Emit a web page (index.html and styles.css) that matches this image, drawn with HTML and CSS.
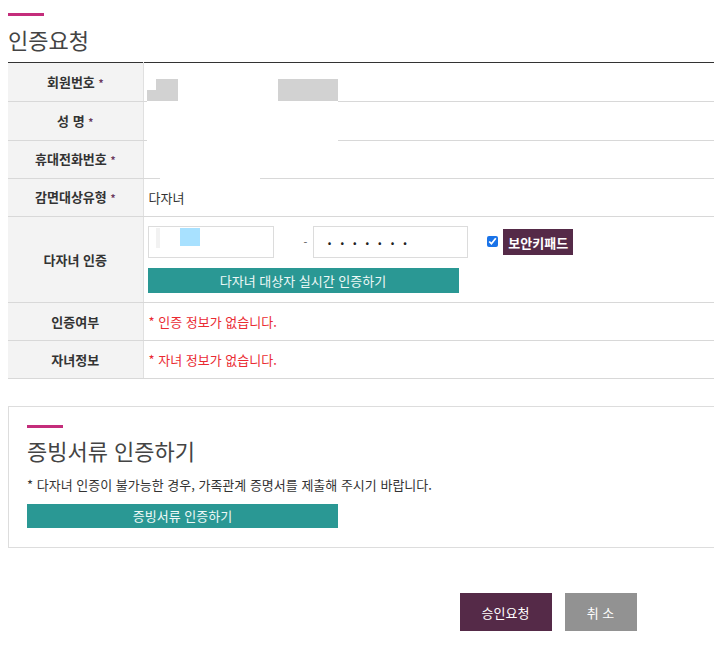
FILE: index.html
```html
<!DOCTYPE html>
<html lang="ko">
<head>
    <meta charset="UTF-8">
    <meta name="viewport" content="width=device-width, initial-scale=1.0">
    <title>인증요청</title>
    <link rel="stylesheet" href="styles.css">
</head>
<body>
<div class="page">
    <div class="bar"></div>
    <h2 class="title">인증요청</h2>

    <div class="tbl-wrap">
        <table class="form-table">
            <tr class="tall">
                <th>회원번호 <span class="req">*</span></th>
                <td></td>
            </tr>
            <tr class="tall">
                <th>성 명 <span class="req">*</span></th>
                <td></td>
            </tr>
            <tr>
                <th>휴대전화번호 <span class="req">*</span></th>
                <td></td>
            </tr>
            <tr>
                <th>감면대상유형 <span class="req">*</span></th>
                <td>다자녀</td>
            </tr>
            <tr class="auth-row">
                <th>다자녀 인증</th>
                <td>
                    <div class="ssn">
                        <div class="field field-front">
                            <span class="mask-faint"></span>
                            <span class="mask-blue"></span>
                        </div>
                        <span class="dash">-</span>
                        <div class="field field-back">.......</div>
                        <input type="checkbox" class="chk" checked>
                        <button class="keypad">보안키패드</button>
                    </div>
                    <button class="btn-teal btn-auth">다자녀 대상자 실시간 인증하기</button>
                </td>
            </tr>
            <tr>
                <th>인증여부</th>
                <td class="err">* 인증 정보가 없습니다.</td>
            </tr>
            <tr>
                <th>자녀정보</th>
                <td class="err">* 자녀 정보가 없습니다.</td>
            </tr>
        </table>
        <!-- redacted personal info -->
        <span class="cover cover-a"></span>
        <span class="cover cover-b"></span>
        <span class="blot blot-1"></span>
        <span class="blot blot-2"></span>
        <span class="blot blot-3"></span>
    </div>

    <div class="doc-box">
        <div class="bar"></div>
        <h3 class="doc-title">증빙서류 인증하기</h3>
        <p class="doc-note">* 다자녀 인증이 불가능한 경우, 가족관계 증명서를 제출해 주시기 바랍니다.</p>
        <button class="btn-teal btn-doc">증빙서류 인증하기</button>
    </div>

    <div class="actions">
        <button class="btn-ok">승인요청</button>
        <button class="btn-cancel">취 소</button>
    </div>
</div>
</body>
</html>
```

FILE: styles.css
```css
*{
    margin: 0;
    padding: 0;
    box-sizing: border-box;
}
html{
    overflow: hidden;
}
body{
    font-family: "Noto Sans CJK KR", "Noto Sans", sans-serif;
    font-size: 13px;
    color: #333;
    background: #fff;
}
button{
    font-family: inherit;
    border: none;
    cursor: pointer;
}

.page{
    width: 1088px;
    padding: 13px 0 0 8px;
}
.bar{
    width: 36px;
    height: 3px;
    background-color: #c42d7b;
}
.title{
    font-size: 22px;
    font-weight: 400;
    line-height: 30px;
    color: #444;
    margin-top: 8px;
}

.tbl-wrap{
    position: relative;
    margin-top: 8px;
}
.form-table{
    width: 100%;
    border-collapse: collapse;
    border-top: 1px solid #333;
}
.form-table th{
    width: 135px;
    height: 38px;
    background-color: #f3f3f3;
    border-right: 1px solid #e0e0e0;
    border-bottom: 1px solid #d8d8d8;
    font-size: 13px;
    font-weight: 700;
    color: #333;
    text-align: center;
    line-height: 16px;
}
.form-table td{
    height: 38px;
    padding: 0 5px;
    border-bottom: 1px solid #d8d8d8;
    line-height: 16px;
}
.form-table .tall th,
.form-table .tall td{
    height: 39px;
}
.req{
    color: #6a3a5c;
    font-size: 10px;
}
.form-table td.err{
    color: #ea2b33;
}

.auth-row td{
    padding: 9px 4px 9px;
}
.ssn{
    display: flex;
    align-items: center;
}
.field{
    height: 32px;
    border: 1px solid #dcdcdc;
    background: #fff;
}
.field-front{
    width: 126px;
    display: flex;
    align-items: flex-start;
    padding: 1px 0 0 7px;
}
.mask-faint{
    width: 4px;
    height: 20px;
    background: #f2f2f2;
}
.mask-blue{
    width: 20px;
    height: 18px;
    margin-left: 20px;
    background: #a8e1ff;
}
.dash{
    margin: 0 6px 0 30px;
    font-size: 11px;
    color: #555;
}
.field-back{
    width: 155px;
    padding-left: 13px;
    font-size: 14px;
    font-weight: 700;
    letter-spacing: 8px;
    line-height: 24px;
    color: #222;
}
.chk{
    width: 11px;
    height: 11px;
    margin: 0 0 2px 19px;
    accent-color: #1a73e8;
}
.keypad{
    margin-left: 5px;
    height: 26px;
    padding: 0 5px;
    background-color: #552a48;
    color: #fff;
    font-size: 13px;
    font-weight: 700;
}
.btn-teal{
    display: block;
    background-color: #2a9894;
    color: #eef8f7;
    font-size: 13px;
    line-height: 16px;
}
.btn-auth{
    width: 311px;
    height: 25px;
    margin-top: 10px;
}

.cover{
    position: absolute;
    background: #fff;
}
.cover-a{
    left: 139px;
    top: 2px;
    width: 191px;
    height: 79px;
}
.cover-b{
    left: 152px;
    top: 110px;
    width: 100px;
    height: 8px;
}
.blot{
    position: absolute;
    background: #d2d2d2;
}
.blot-1{
    left: 148px;
    top: 17px;
    width: 22px;
    height: 22px;
}
.blot-2{
    left: 139px;
    top: 28px;
    width: 9px;
    height: 11px;
}
.blot-3{
    left: 270px;
    top: 17px;
    width: 60px;
    height: 22px;
}

.doc-box{
    margin-top: 27px;
    border: 1px solid #dddddd;
    padding: 18px 18px 19px;
}
.doc-title{
    font-size: 22px;
    font-weight: 400;
    line-height: 30px;
    color: #444;
    margin-top: 7px;
}
.doc-note{
    margin-top: 11px;
    line-height: 18px;
    font-size: 13px;
    color: #333;
}
.btn-doc{
    width: 311px;
    height: 24px;
    margin-top: 10px;
}

.actions{
    display: flex;
    justify-content: center;
    gap: 13px;
    margin-top: 45px;
}
.btn-ok, .btn-cancel{
    height: 38px;
    color: #fff;
    font-size: 13px;
}
.btn-ok{
    width: 92px;
    background-color: #552a48;
}
.btn-cancel{
    width: 72px;
    background-color: #929292;
}
```
